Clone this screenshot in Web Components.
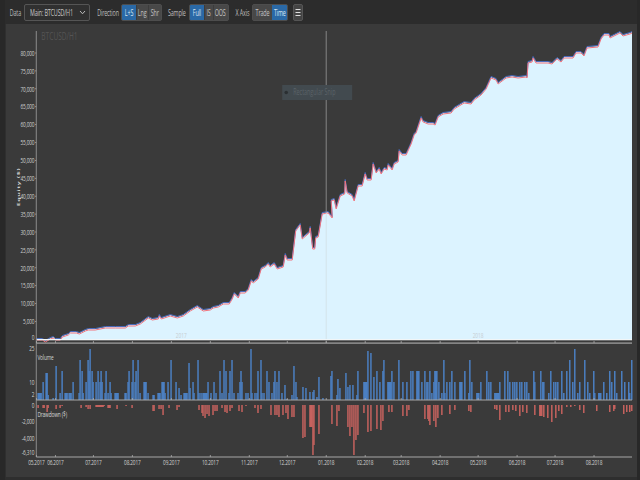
<!DOCTYPE html>
<html><head><meta charset="utf-8"><title>Equity chart</title>
<style>
html,body{margin:0;padding:0;background:#262626;overflow:hidden;width:640px;height:480px}
</style></head>
<body>
<x-app>
  <x-toolbar>
    <x-label w="11" mr="3">Data</x-label>
    <x-select>Main: BTCUSD/H1</x-select>
    <x-label w="21" mr="3">Direction</x-label>
    <x-group mr="7">
      <x-btn w="14" active>L+S</x-btn><x-btn w="12">Lng</x-btn><x-btn w="13">Shr</x-btn>
    </x-group>
    <x-label w="16" mr="4">Sample</x-label>
    <x-group mr="6">
      <x-btn w="14" active>Full</x-btn><x-btn w="9">IS</x-btn><x-btn w="15">OOS</x-btn>
    </x-group>
    <x-label w="14" mr="3">X Axis</x-label>
    <x-group mr="5">
      <x-btn w="19">Trade</x-btn><x-btn w="15" active>Time</x-btn>
    </x-group>
    <x-menu></x-menu>
  </x-toolbar>
  <x-chart></x-chart>
</x-app>
<script>
const SX=0.6, X=x=>(x/SX).toFixed(2);
function def(name,css,html,init){
  customElements.define(name,class extends HTMLElement{
    constructor(){super();const r=this.attachShadow({mode:'open'});r.innerHTML='<style>'+css+'</style>'+html;}
    connectedCallback(){init&&init.call(this,this.shadowRoot);}
  });
}
const narrow=`.t{display:block;flex:none;transform:scaleX(${SX});white-space:nowrap;letter-spacing:-.25px}`;
def('x-app',`:host{display:flex;flex-direction:column;width:640px;height:480px;box-sizing:border-box;padding:0 3px 0 5px;background:#282828;font-family:"Open Sans","Liberation Sans",sans-serif;color:#c9c9c9}`,`<slot></slot>`);
def('x-toolbar',`:host{display:flex;align-items:center;height:24px;flex:none;background:#2c2c2c;padding-left:5px;box-sizing:border-box;font-size:9px}`,`<slot></slot>`);
def('x-label',`:host{display:flex;justify-content:center;flex:none;color:#bdbdbd}`+narrow,`<span class="t"><slot></slot></span>`,function(){this.style.width=this.getAttribute('w')+'px';this.style.marginRight=this.getAttribute('mr')+'px';});
def('x-select',`:host{display:flex;align-items:center;justify-content:space-between;flex:none;box-sizing:border-box;width:66px;height:17px;border:1px solid #555;border-radius:2px;background:#303030;padding:0 3px 0 5px;margin-right:7px;color:#c8c8c8}
.b{flex:1;min-width:0;display:flex}
svg{display:block;flex:none}`+narrow+`.t{transform-origin:0 50%}`,`<span class="b"><span class="t"><slot></slot></span></span><svg width="7" height="5" viewBox="0 0 7 5"><path d="M1 1l2.5 2.8L6 1" fill="none" stroke="#bbb" stroke-width="1"/></svg>`);
def('x-group',`:host{display:flex;flex:none;height:17px;border:1px solid #4d4d4d;border-radius:2px;box-sizing:border-box;overflow:hidden;background:#484848}`,`<slot></slot>`,function(){this.style.marginRight=this.getAttribute('mr')+'px';});
def('x-btn',`:host{display:flex;align-items:center;justify-content:center;flex:none;box-sizing:border-box;height:100%;background:#484848;color:#c4c4c4;box-shadow:inset 1px 0 0 #3c3c3c}
:host(:first-child){box-shadow:none}
:host([active]){background:#2a69a6;color:#d8e6f2;box-shadow:none}`+narrow,`<span class="t"><slot></slot></span>`,function(){this.style.width=this.getAttribute('w')+'px';});
def('x-menu',`:host{display:flex;align-items:center;justify-content:center;flex:none;box-sizing:border-box;width:10px;height:17px;border:1px solid #555;border-radius:2px;background:#444}`,`<svg width="6" height="9" viewBox="0 0 6 9"><path d="M.5 1.5h5M.5 4.5h5M.5 7.5h5" stroke="#ddd" stroke-width="1.2"/></svg>`);

const curve=[[36,339],[42,339],[45,341],[50,338],[53,337],[55,339],[60,339],[62,336],[68,334],[70,332],[76,332],[79,333],[85,330],[88,329],[95,329],[105,327],[115,327],[125,327],[128,325],[135,325],[140,323],[148,317],[152,319],[158,318],[159,315],[161,318],[170,315],[177,317],[183,315],[190,310],[197,306],[203,310],[210,309],[213,307],[218,306],[223,303],[229,303],[232,298],[234,293],[238,297],[240,292],[245,292],[248,289],[251,280],[253,282],[258,278],[261,268],[265,266],[268,263],[270,266],[274,263],[277,268],[283,266],[285,254],[287,259],[292,259],[295.5,230],[300,224],[302,238],[309,232],[310,227],[312.5,248],[314.5,248],[315.5,237],[318,236],[322,213],[328,212],[332,217],[331,200],[334,199],[336,208],[340,195],[344.5,193],[345,180],[347,192],[352,195],[354,200],[358,185],[362,185],[365,173],[367,179],[371,179],[373,163],[376,172],[379,168],[381,173],[384,168],[387,169],[388,164],[392,169],[394,163],[398,161],[399,150],[402,154],[406,154],[411,143],[414,134],[416,132],[421,117],[423,121],[428,123],[433,123],[435,124],[438,116],[443,113],[451,112],[454,108],[464,102],[471,103],[474,99],[481,94],[486,88],[491,77],[496,79],[498,83],[506,77],[512,76],[518,77],[526,76],[527,77],[528,62],[532,61],[533,57],[536,62],[548,62],[552,63],[557,58],[561,61],[564,57],[573,57],[576,52],[581,52],[584,55],[587,47],[598,46],[601,38],[604,34],[609,34],[610,37],[616,34],[620,32],[623,35],[630,33],[632,32]];
const vol="37-40:7 42:18 45-46:27 47:5 52:2 55:34 59:7 61:29 64-66:7 68-70:7 72:18 78:7 79:40 81:29 82:7 85:18 87:40 88:29 89:51 91:29 92:18 95:18 97:29 99:18 100:29 101:18 104:7 105:29 107:7 109:18 110:7 114-117:7 124-125:7 127:18 128:29 131:18 132:40 134:18 135:29 137:40 139:7 143-145:18 147:7 152-153:5 157-159:7 161-163:18 164:7 167:18 170:40 175:18 178:12 180:5 183-186:7 188:37 189:12 192:18 193:7 197:40 198:7 200:7 202-206:7 207:18 210:7 213:18 215:7 219:29 221:7 223:40 225:29 228:7 229:29 231:40 233:7 237:7 239:18 240:29 241:18 245:7 247:7 250:51 251:7 254:7 256:7 257:29 260:40 261:7 263:7 266:29 268:18 271:7 273:18 274:29 276:18 278:29 281:7 284:15 286:1 291:5 293:34 295:18 296:3 302:13 305:12 309:8 312:8 313:10 316:3 318:23 322:2 330:24 331:29 336:5 337:21 339:12 345:27 347:13 349:15 352:15 356:5 357:29 363-366:18 367:49 370:47 373:23 376:29 379:18 382:29 383:40 387-390:18 391:29 393:18 398:40 402:18 406:18 410:29 412:29 416-418:29 421:18 424:29 426:18 427:18 429:29 431:7 433:18 434-436:29 438:18 441:7 443:40 444:7 446:18 449:18 451:29 454:18 459-461:18 464:29 468:7 469:40 471:18 476-478:7 480:18 486:29 488:18 490:18 494-498:7 499:18 504:29 507:29 509:18 512:18 514:18 516:18 519:18 521:18 524:18 526:18 528:7 533:29 534:18 540:29 542:18 543:18 548:7 550:29 553:18 555:18 557:18 561:29 563:7 566:29 569:40 572:18 574:51 577:7 579:18 584:40 587:18 589:7 593:29 594:7 598-600:7 603:18 606:7 609:29 611:18 614:29 616:7 621:29 624:18 628:18 629:7 631:40";
const dd="37:3 42:3 43:3 46:7 47:3 55:4 59:3 61:1 80:3 85:2 87:4 89:4 95-102:2 103:1 107-109:3 116:4 125:1 131:3 152:6 153:6 158:4 160:4 162:10 168:3 176:5 178:2 198:5 201:8 202:11 204:13 206:9 208:11 212:10 214:6 216:6 221:3 224:7 226:8 229:6 231:3 238:6 241:7 245:1 254:3 257:8 260:4 270:10 274:10 276:10 278:12 282:10 285:8 287:14 291:12 293:12 302:33 304:32 309-311:22 312:50 313:40 318:29 331:19 336:21 338:6 347:22 349:31 351:22 353:50 355:35 357:30 363:8 367:27 370:26 376:24 380:25 382:16 388:7 391:7 402:11 406:11 408:5 424:14 427:14 428:16 429:20 433:16 435:22 437:13 441:10 449:9 454:5 468:6 470:7 494:4 496:5 499:15 505:7 508:7 512:5 515:6 519:11 522:7 526:8 534:10 539-541:11 543:12 547:13 551:17 555:13 558:6 561:9 566:2 570:2 574:1 579:5 583:8 596:6 609:7 613:6 614:4 623:9 626:7 629:7 631:6";
function bars(s,fn){
  return s.split(' ').map(p=>{
    let [r,h]=p.split(':');let [a,b]=r.split('-').map(Number);if(b===undefined)b=a;h=+h;
    return fn(a,b+1.5,h);
  }).join('');
}
const months=[[36,'05.2017'],[55,'06.2017'],[93,'07.2017'],[132,'08.2017'],[171,'09.2017'],[210,'10.2017'],[249,'11.2017'],[287,'12.2017'],[326,'01.2018'],[365,'02.2018'],[401,'03.2018'],[440,'04.2018'],[478,'05.2018'],[517,'06.2018'],[555,'07.2018'],[594,'08.2018']];
function chartSvg(){
  let o='';
  const pts=(dy)=>curve.map(p=>X(p[0])+','+(p[1]+dy)).join(' ');
  o+=`<polygon points="${X(36)},339.5 ${pts(0)} ${X(632)},339.5" fill="#dcf3ff"/>`;
  o+=`<polyline points="${pts(-.5)}" fill="none" stroke="#4a6cbc" stroke-width="1" vector-effect="non-scaling-stroke"/>`;
  o+=`<polyline points="${pts(1)}" fill="none" stroke="#f2737c" stroke-width="1" vector-effect="non-scaling-stroke"/>`;
  o+=`<rect x="${X(36)}" y="339" width="${X(596)}" height="1.3" fill="#f1f5f7"/>`;
  o+=`<rect x="${X(325.5)}" y="31" width="${X(1)}" height="181" fill="#858585"/><rect x="${X(325.5)}" y="213" width="${X(1)}" height="126" fill="#d3e3ea"/><rect x="${X(325.5)}" y="340" width="${X(1)}" height="3" fill="#858585"/>`;
  o+=`<text x="${X(181)}" y="338" class="yr">2017</text><text x="${X(478)}" y="338" class="yr">2018</text>`;
  o+=`<text x="${X(41)}" y="40" class="wm">BTCUSD/H1</text>`;
  o+=`<rect x="${X(282)}" y="85" width="${X(70)}" height="15" fill="#424a4f"/><ellipse cx="${X(286)}" cy="92.5" rx="3" ry="1.8" fill="#2b2f32"/><text x="${X(293)}" y="95.5" class="lg">Rectangular Snip</text>`;
  for(let i=0;i<=16;i++){
    const v=80000-i*5000,y=53+i*17.9;
    const ty=i==16?337:y;
    o+=`<text x="${X(34)}" y="${ty+2.8}" class="ax" text-anchor="end">${v?v.toLocaleString('en-US'):0}</text>`;
    if(i<16)o+=`<rect x="${X(34.5)}" y="${y-.4}" width="${X(1.5)}" height=".8" fill="#aaa"/>`;
  }
  o+=`<text transform="translate(${X(20)},187) rotate(-90)" class="eq" text-anchor="middle">Equity ($)</text>`;
  [[25,348],[10,382],[2,394]].forEach(([v,y])=>o+=`<text x="${X(34)}" y="${y+2.8}" class="ax" text-anchor="end">${v}</text>`);
  [['0',405],['-2,000',421],['-4,000',438],['-6,310',452]].forEach(([v,y])=>o+=`<text x="${X(34)}" y="${y+2.8}" class="ax" text-anchor="end">${v}</text>`);
  o+=bars(vol,(a,b,h)=>`<rect x="${X(a)}" y="${400-h}" width="${X(b-a)}" height="${h}" fill="#4b7fc1"/>`);
  o+=bars(dd,(a,b,h)=>`<rect x="${X(a)}" y="405" width="${X(b-a)}" height="${h}" fill="#c5625e"/>`);
  o+=`<rect x="${X(35.4)}" y="31" width="${X(1)}" height="426" fill="#8c8c8c"/>`;
  [[343,1.2],[400,1],[457,1]].forEach(([y,h])=>o+=`<rect x="${X(36)}" y="${y-.5}" width="${X(596)}" height="${h}" fill="#a6a6a6"/>`);
  months.forEach(([x,t])=>{
    o+=`<rect x="${X(x-.4)}" y="341" width="${X(.8)}" height="2" fill="#aaa"/><rect x="${X(x-.4)}" y="398" width="${X(.8)}" height="2" fill="#aaa"/><rect x="${X(x-.4)}" y="455" width="${X(.8)}" height="2" fill="#aaa"/>`;
    o+=`<text x="${X(x)}" y="465.5" class="ax" text-anchor="middle">${t}</text>`;
  });
  o+=`<text x="${X(37)}" y="360" class="pl">Volume</text><text x="${X(37)}" y="417" class="pl">Drawdown ($)</text>`;
  return o;
}
const W=(637-5.6)/SX, H=453;
def('x-chart',`:host{display:block;flex:1;position:relative;background:#3a3a3a;border-bottom:3px solid #2e2e2e;border-left:1px solid #2f2f2f;box-sizing:border-box;overflow:hidden}
svg{display:block;width:100%;height:100%}
#c{width:100%;height:100%}
text{font-family:"Open Sans","Liberation Sans",sans-serif}
.ax{font-size:8px;fill:#cfcfcf;letter-spacing:-.3px}
.pl{font-size:8px;fill:#d4d4d4;letter-spacing:-.2px}
.yr{font-size:8px;fill:#c6cdd1;text-anchor:middle}
.wm{font-size:11px;fill:#545454}
.lg{font-size:9px;fill:#5b6368}
.eq{font-size:7px;fill:#d0d0d0;font-weight:700;letter-spacing:.6px}`,`<div id="c"></div>`,function(r){
  r.getElementById('c').innerHTML=`<svg viewBox="${5.6/SX} 24 ${W} ${H}" preserveAspectRatio="none">${chartSvg()}</svg>`;
});
</script>
</body></html>
